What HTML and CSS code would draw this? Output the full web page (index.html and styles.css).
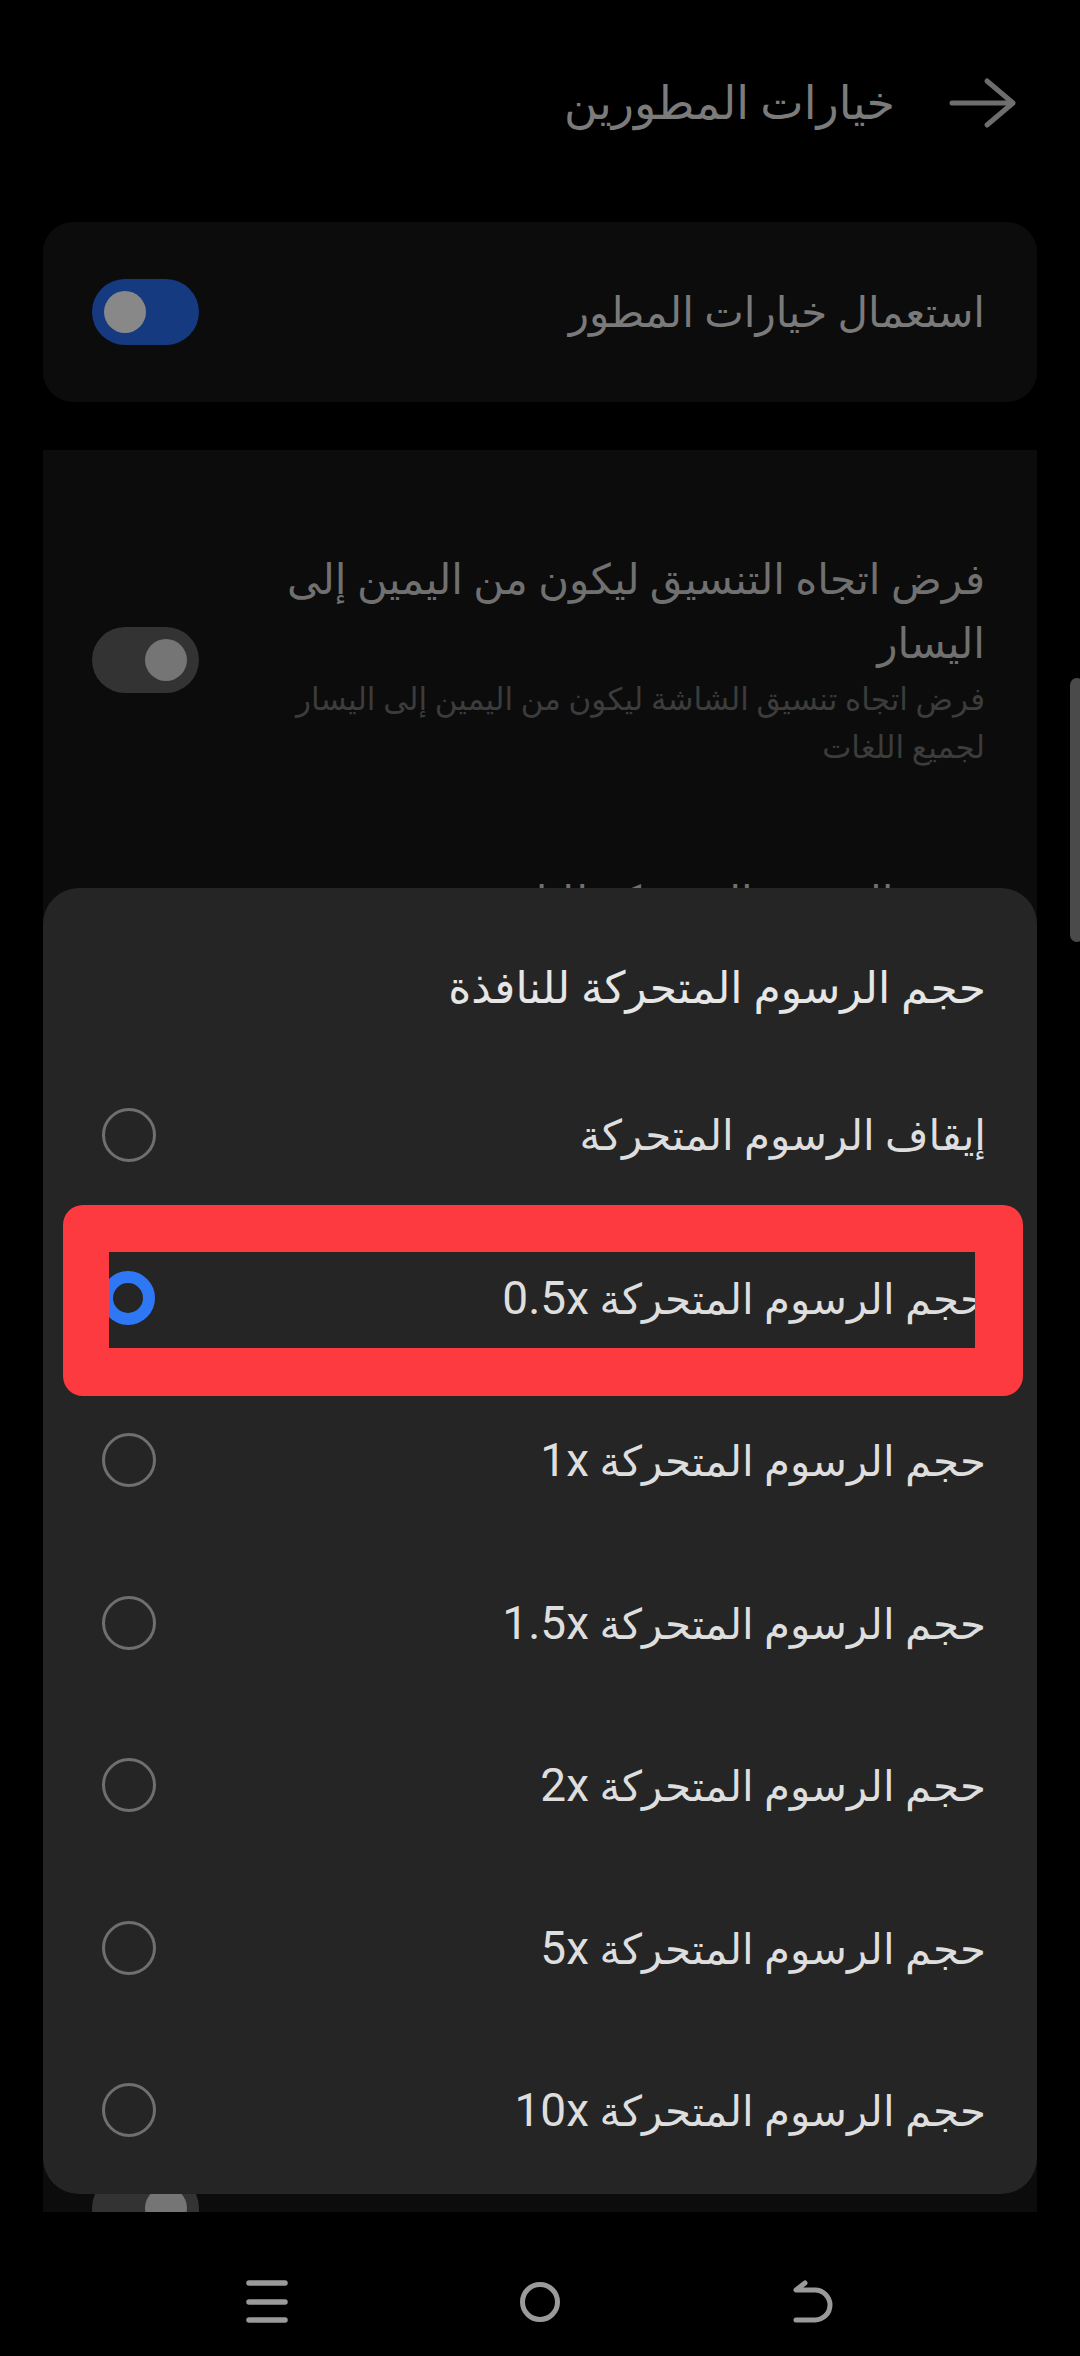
FILE: index.html
```html
<!DOCTYPE html>
<html lang="ar" dir="rtl">
<head>
<meta charset="utf-8">
<title>خيارات المطورين</title>
<link rel="stylesheet" href="styles.css">
</head>
<body>
<div class="screen">
  <header class="header">
    <svg class="back-arrow" width="70" height="54" viewBox="0 0 70 54"><path d="M4 27 H65 M39 5 L65 27 L39 49" fill="none" stroke="#6e6e6e" stroke-width="5" stroke-linecap="round" stroke-linejoin="round"/></svg>
    <h1 class="header-title">خيارات المطورين</h1>
  </header>

  <section class="card card-main">
    <span class="card-main-label">استعمال خيارات المطور</span>
    <span class="toggle toggle-on"><span class="thumb"></span></span>
  </section>

  <section class="card card-list">
    <div class="set-row set-row-rtl">
      <div class="set-text">
        <div class="set-title">فرض اتجاه التنسيق ليكون من اليمين إلى اليسار</div>
        <div class="set-sub">فرض اتجاه تنسيق الشاشة ليكون من اليمين إلى اليسار لجميع اللغات</div>
      </div>
      <span class="toggle toggle-off"><span class="thumb"></span></span>
    </div>
    <div class="set-row set-row-anim">
      <div class="set-title">حجم الرسوم المتحركة للنافذة</div>
    </div>
    <div class="set-row set-row-last">
      <div class="set-title">&nbsp;</div>
      <span class="toggle toggle-off"><span class="thumb"></span></span>
    </div>
  </section>

  <nav class="navbar">
    <svg width="44" height="44" viewBox="0 0 44 44"><path d="M4 3 H40 M4 22 H40 M4 40 H40" stroke="#9a9a9a" stroke-width="5.5" stroke-linecap="round" fill="none"/></svg>
    <svg width="44" height="44" viewBox="0 0 44 44"><circle cx="22" cy="22" r="17.5" stroke="#9a9a9a" stroke-width="5" fill="none"/></svg>
    <svg width="44" height="44" viewBox="0 0 44 44"><path d="M14 3 L5 10 H24 A15 15 0 0 1 24 40 H5" stroke="#9a9a9a" stroke-width="5" stroke-linecap="round" stroke-linejoin="round" fill="none"/></svg>
  </nav>

  <div class="scrollbar"></div>

  <div class="dialog">
    <div class="dialog-title">حجم الرسوم المتحركة للنافذة</div>
    <div class="opt"><span class="opt-label">إيقاف الرسوم المتحركة</span><span class="radio"></span></div>
    <div class="opt"><span class="opt-label">حجم الرسوم المتحركة <span class="num">0.5x</span></span><span class="radio radio-on"></span></div>
    <div class="opt"><span class="opt-label">حجم الرسوم المتحركة <span class="num">1x</span></span><span class="radio"></span></div>
    <div class="opt"><span class="opt-label">حجم الرسوم المتحركة <span class="num">1.5x</span></span><span class="radio"></span></div>
    <div class="opt"><span class="opt-label">حجم الرسوم المتحركة <span class="num">2x</span></span><span class="radio"></span></div>
    <div class="opt"><span class="opt-label">حجم الرسوم المتحركة <span class="num">5x</span></span><span class="radio"></span></div>
    <div class="opt"><span class="opt-label">حجم الرسوم المتحركة <span class="num">10x</span></span><span class="radio"></span></div>
    <div class="highlight"></div>
  </div>
</div>
</body>
</html>
```
FILE: styles.css
```css
* { box-sizing: border-box; }
html, body { margin: 0; padding: 0; background: #000; }
body {
  font-family: Roboto, "DejaVu Sans", sans-serif;
  width: 1080px;
  height: 2356px;
  overflow: hidden;
}
.screen {
  position: relative;
  width: 1080px;
  height: 2356px;
  overflow: hidden;
}
.header {
  height: 222px;
  display: flex;
  align-items: center;
  padding: 0 62px 16px 0;
  gap: 53px;
}
.back-arrow { flex: none; }
.header-title {
  margin: 0;
  font-weight: normal;
  font-size: 46px;
  color: #7b7b7b;
}
.card {
  margin: 0 43px;
  background: #0c0c0c;
}
.card-main {
  height: 180px;
  border-radius: 30px;
  display: flex;
  align-items: center;
  justify-content: space-between;
  padding: 0 52px 0 49px;
}
.card-main-label { font-size: 42px; color: #7a7a7a; }
.toggle {
  flex: none;
  width: 107px;
  height: 66px;
  border-radius: 33px;
  display: flex;
  align-items: center;
  padding: 0 12px;
}
.toggle .thumb {
  width: 42px;
  height: 42px;
  border-radius: 50%;
  background: #888;
}
.toggle-on { background: #153a80; justify-content: flex-end; }
.toggle-off { background: #333; justify-content: flex-start; }
.toggle-off .thumb { background: #757575; }

.card-list {
  margin-top: 48px;
  height: 1762px;
  overflow: hidden;
  display: flex;
  flex-direction: column;
}
.set-row {
  flex: none;
  display: flex;
  align-items: center;
  justify-content: space-between;
  padding: 0 52px 0 49px;
}
.set-row-rtl { height: 420px; }
.set-text { width: 725px; }
.set-title { font-size: 42px; line-height: 64px; color: #707070; }
.set-sub { font-size: 31px; line-height: 48px; color: #3c3c3c; }
.set-row-anim { height: 1288px; align-items: flex-start; }
.set-row-last { height: 100px; }

.navbar {
  direction: ltr;
  height: 144px;
  display: flex;
  justify-content: center;
  align-items: flex-start;
  padding-top: 68px;
  gap: 229px;
}

.scrollbar {
  position: absolute;
  left: 1070px;
  top: 678px;
  width: 14px;
  height: 264px;
  background: #4a4a4a;
  border-radius: 10px;
}

.dialog {
  position: absolute;
  left: 43px;
  top: 888px;
  width: 994px;
  height: 1306px;
  background: #252525;
  border-radius: 36px;
}
.dialog-title {
  height: 166px;
  display: flex;
  align-items: center;
  padding: 34px 51px 0;
  font-size: 44px;
  color: #e6e6e6;
}
.opt {
  height: 162.5px;
  display: flex;
  align-items: center;
  justify-content: space-between;
  padding: 0 51px 0 59px;
}
.opt-label { font-size: 42px; color: #dedede; }
.num { font-family: Roboto, sans-serif; font-size: 46px; }
.radio {
  flex: none;
  width: 54px;
  height: 54px;
  border-radius: 50%;
  border: 3px solid #6f6f6f;
}
.radio-on {
  border: 12px solid #2f78f5;
  margin-left: -1px;
}
.highlight {
  position: absolute;
  left: 20px;
  top: 317px;
  width: 960px;
  height: 191px;
  border-style: solid;
  border-color: #fd3a3f;
  border-width: 47px 48px 48px 46px;
  border-radius: 20px;
}
```
